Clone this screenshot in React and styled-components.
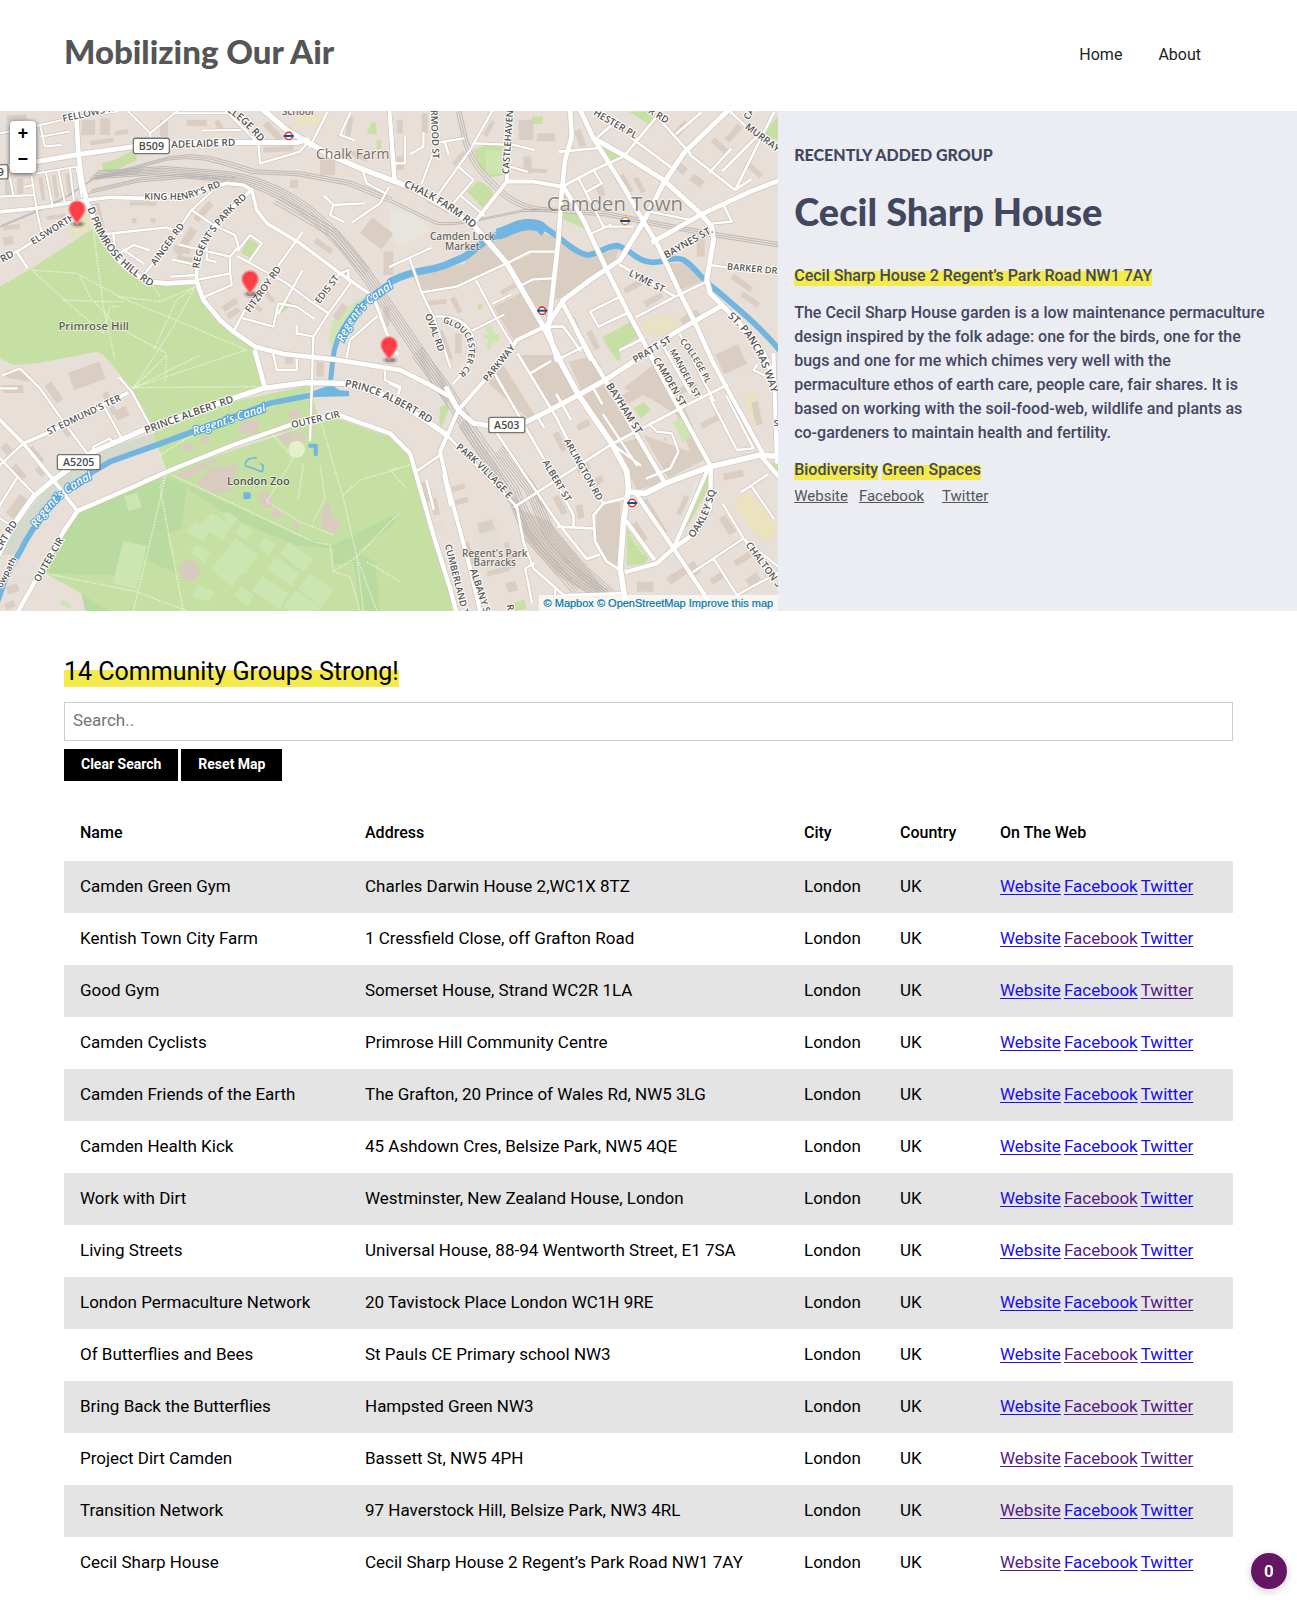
import React, { useState } from "react";
import styled, { createGlobalStyle } from "styled-components";

const GlobalStyle = createGlobalStyle`
  *, *::before, *::after { box-sizing: border-box; }
  body {
    margin: 0;
    background: #fff;
    color: #000;
    font: 17px/24px Roboto, "Liberation Sans", sans-serif;
  }
`;

const displayFont = `Lato, "Open Sans", sans-serif`;

/* ---------- header ---------- */

const Header = styled.header`
  display: flex;
  align-items: center;
  justify-content: space-between;
  height: 111px;
  padding: 0 80px 10px 64px;
`;

const SiteTitle = styled.h1`
  margin: 0;
  color: #555;
  font: 900 33px/40px ${displayFont};
`;

const Nav = styled.nav`
  display: flex;
  gap: 4px;
  padding-top: 8px;
  font-size: 16px;
`;

const NavLink = styled.a`
  padding: 0 16px;
  color: #222;
  text-decoration: none;
`;

/* ---------- map and featured group ---------- */

const Hero = styled.section`
  display: grid;
  grid-template-columns: 3fr 2fr;
  background: #ecedf3;
`;

const MapFrame = styled.div`
  position: relative;
  height: 500px;
  overflow: hidden;
`;

const MapDrawing = styled.svg`
  display: block;
  width: 100%;
  height: 100%;
  font-family: "Open Sans", "Noto Sans", sans-serif;
`;

const ZoomControl = styled.div`
  position: absolute;
  top: 10px;
  left: 10px;
  display: flex;
  flex-direction: column;
  width: 26px;
  border-radius: 4px;
  background: #fff;
  box-shadow: 0 1px 5px rgba(0, 0, 0, 0.65);
`;

const ZoomButton = styled.button`
  height: 26px;
  padding: 0;
  border: 0;
  background: none;
  color: #000;
  font: bold 18px/26px "Liberation Mono", monospace;
`;

const Attribution = styled.div`
  position: absolute;
  right: 0;
  bottom: 0;
  padding: 0 5px;
  background: rgba(255, 255, 255, 0.7);
  font: 11px/16px "Liberation Sans", sans-serif;
`;

const AttributionLink = styled.a`
  color: #0078a8;
  text-decoration: none;
  -webkit-text-stroke: 0.2px #0078a8;
`;

const Featured = styled.article`
  padding: 32px 28px 32px 16px;
  color: #424760;
`;

const Eyebrow = styled.h4`
  margin: 0;
  font: 900 16px/24px ${displayFont};
  text-transform: uppercase;
`;

const GroupName = styled.h2`
  margin: 20px 0 29px;
  font: 900 38px/48px ${displayFont};
`;

const Mark = styled.span`
  padding-bottom: 1px;
  background: linear-gradient(transparent ${(p) => p.$from}, #f4ea4c ${(p) => p.$from});
`;

const Copy = styled.p`
  margin: 0 0 13px;
  font-size: 16px;
  font-weight: 500;
`;

const Unbroken = styled.span`
  white-space: nowrap;
`;

const FeaturedLinks = styled.div`
  display: flex;
  font-size: 15px;
  margin-top: -11px;
`;

const FeaturedLink = styled.a`
  margin-right: ${(p) => p.$gap};
  color: #555;
`;

/* ---------- group list ---------- */

const Groups = styled.main`
  padding: 45px 64px 32px;
`;

const Count = styled.h3`
  margin: 0;
  font-size: 25px;
  font-weight: 400;
  line-height: 32px;
`;

const SearchBox = styled.input`
  display: block;
  width: 100%;
  height: 39px;
  margin: 14px 0 8px;
  padding: 0 8px 4px;
  border: 1px solid #ccc;
  border-radius: 0;
  font: inherit;
  &::placeholder { color: #757575; }
`;

const Actions = styled.div`
  display: flex;
  gap: 3px;
`;

const ActionButton = styled.button`
  height: 32px;
  padding: 0 17px 2px;
  border: 0;
  background: #000;
  color: #fff;
  font: bold 14px/24px Roboto, "Liberation Sans", sans-serif;
`;

const Table = styled.table`
  width: 100%;
  margin-top: 22px;
  border-collapse: collapse;
  table-layout: fixed;
`;

const Col = styled.col`
  width: ${(p) => p.$width || "auto"};
`;

const HeadCell = styled.th`
  height: 58px;
  padding: 2px 16px 0;
  font-size: 16px;
  font-weight: 500;
  text-align: left;
`;

const Row = styled.tr`
  height: 52px;
  &:nth-child(odd) { background: #e4e4e4; }
`;

const Cell = styled.td`
  padding: 0 16px 2px;
  white-space: nowrap;
`;

const WebLinks = styled.div`
  display: flex;
  gap: 3px;
`;

const WebLink = styled.a`
  color: ${(p) => (p.$seen ? "#551a8b" : "#1a0dee")};
  text-underline-offset: 2px;
`;

const Counter = styled.button`
  position: fixed;
  right: 10px;
  bottom: 32px;
  width: 36px;
  height: 36px;
  padding: 0;
  border: 0;
  border-radius: 50%;
  background: #651564;
  box-shadow: 0 2px 8px rgba(0, 0, 0, 0.2);
  color: #fff;
  font: bold 17px/36px Roboto, sans-serif;
`;

/* ---------- map data: four tiles, each drawn at three units per pixel ---------- */

const tiles = {
  a: "translate(0 100) scale(.33333)",
  b: "translate(390 100) scale(.33333)",
  c: "translate(0 355) scale(.33333)",
  d: "translate(390 355) scale(.33333)",
};

const areas = [
  ["a", "#c6dfa3", "M0 560L95 505 280 385 300 400 340 465 440 545 590 545 610 600 660 660 765 740 795 865 460 1000 395 865 310 765 290 755 110 790 40 795 0 775Z"],
  ["a", "#e6e4c0", "M205 380L262 340 280 385 215 420Z"],
  ["a", "#c6dfa3", "M305 190L340 182 408 148 410 180 340 215 310 215Z M745 415L775 435 755 475 722 460Z M1100 100L1115 68 1128 68 1130 105Z M1130 120h14v28h-14Z M835 635l28-32 14 8-28 26Z"],
  ["a", "#d2e3b5", "M1000 660L1080 595 1100 590 1040 690 1000 740 985 720Z"],
  ["a", "#ece3c2", "M870 70L905 45 975 40 955 75 900 75Z"],
  ["c", "#c6dfa3", "M460 235L700 140 930 90 960 200 700 275 500 352 470 275Z"],
  ["c", "#c6dfa3", "M232 468L500 352 960 200 1010 190 1170 245 1235 310 1260 420 1300 570 1370 768 270 768 245 715 135 655 190 535Z"],
  ["c", "#badb9f", "M232 468L400 400 500 365 560 400 545 520 500 540 530 655 430 610 410 700 340 660 135 655 190 535Z"],
  ["c", "#badb9f", "M510 365L780 490 890 540 1000 570 1200 470 1170 520 1070 590 1125 620 1140 768 1080 768 1060 620 1000 630 1000 580 880 570 700 490 560 400Z M245 715l80 53h-70Z"],
  ["c", "#d5d9cc", "M160 370L290 290 460 235 465 265 320 325 200 400 100 500 50 600 0 600 60 500Z"],
  ["c", "#cbe6b0", "M370 558L440 572 410 700 338 685Z M372 425l38-12 15 44-38 12Z M555 530l30-30 48 25-22 36Z M600 510l35-36 60 35-25 50Z M665 480l15-10 35 20-18 24Z M665 605l42-56 68 50-40 60Z M630 640l35-38 70 42-40 50Z M570 590l18-22 42 24-18 32Z M840 595l28-34 72 50-30 40Z M800 640l30-32 68 45-22 42Z M755 705l32-42 78 52-26 50Z M895 700l35-44 72 50-40 50Z M700 720l25-26 35 26-18 34Z M575 725l20-36 50 22-18 30Z M852 750l35-44 75 50-10 12h-90Z M775 575l22-28 28 20-20 38Z M705 535l20-32 35 25-20 30Z M178 745l10-10 28 14-6 12Z"],
  ["c", "#d9cbc0", "M585 385L640 335 715 330 690 410 640 415Z M525 360L620 320 680 305 600 345 560 375Z M710 225L735 195 778 195 772 230 740 240Z M835 245l38-18 12 28-30 14Z M862 172l28-12 12 24-28 14Z M785 405l30 20 5 30-30 5-15-35Z M808 475l25-18 20 18-22 18Z M965 470l20-40 10 50 30 30-30 25-30-20Z M870 500l28 5-5 28Z M890 230l28 10-8 22-26-10Z M548 270l25-8 10 20-28 8Z M600 250l20-6 8 20-20 6Z"],
  ["c", "#d7cbbf", "M537 646a31 31 0 1 0 62 0a31 31 0 1 0-62 0Z"],
  ["c", "#e6f0c8", "M865 283a25 25 0 1 0 50 0a25 25 0 1 0-50 0Z"],
  ["b", "#c6dfa3", "M250 150L290 135 345 140 340 225 305 232 270 205Z M230 275L265 242 300 262 312 290 275 322 255 300Z M715 35h70l15 22-18 20Z M640 145l48 20-22 18Z M1120 100l50-60v85Z M425 50h32v22h-32Z M522 275l14 18-2 42-14-8Z M520 342l46 0 18 45-65-30Z M637 712L725 662 745 710 690 745 690 780 665 760Z M262 615l12-4 4 14-12 4Z"],
  ["b", "#cde5ae", "M285 150h50v70l-45 5Z M285 680l20-5 5 22 20 12-5 18-18-5-5 30-14-5 6-30-20-6 20-10Z"],
  ["b", "#e9e2c4", "M755 660L835 640 875 680 820 705 760 700Z M435 492l45-4v25l-40 2Z"],
  ["b", "#e8e5df", "M0 330L70 340 125 390 30 440 0 400Z"],
  ["b", "#dacdc2", "M280 425L340 395 420 390 500 410 495 450 420 450 350 485 200 560 90 570 70 530 225 490 235 455Z M360 490L430 460 500 460 470 650 450 640Z M510 430L590 470 650 455 690 440 670 490 600 540 520 590 495 600Z M310 620L410 570 460 670 370 720Z M820 490L900 490 945 540 870 570Z"],
  ["d", "#dacdc2", "M290 80L340 30 440 190 420 195Z M390 0L500 0 555 120 480 160Z M535 20L600 5 640 75 575 110Z M575 125L640 90 730 240 670 260Z M670 270L740 250 815 385 740 405 715 350Z M640 450L690 440 690 640 650 610 615 550 620 480Z M800 20L880 150 950 310 835 370 760 240 900 290 860 180 780 130 700 100Z M380 460L480 500 640 700 660 720 600 720 500 660 410 560Z"],
  ["d", "#c6dfa3", "M935 365L955 360 955 400 900 500 855 560Z M710 520L775 610 765 625 710 632Z M1125 325l45-5v42Z M730 160l30-18 22 22-30 26Z M372 742l30-8 8 28-35 4Z M150 155l22-10 5 18-22 50-8-5Z M820 250l6-5 6 12-8 0Z M670 0h22l-8 18Z"],
  ["d", "#cde5ae", "M848 200l26-12 30 60-26 12Z"],
  ["d", "#ebe2c0", "M1058 125l36-16 28 90-30 16Z M1030 440L1070 405 1170 520 1130 560 1090 530Z"],
  ["d", "#e3ddd6", "M255 500l55-18 35 150-55 14Z M130 500l22-6 12 30-22 6Z"],
];

/* tile, x, y, width, height, rotation */
const buildings = [
  ["a", 245, 60, 40, 45, 0], ["a", 300, 55, 30, 50, 0], ["a", 345, 90, 40, 14, -8], ["a", 270, 118, 70, 14, -8],
  ["a", 20, 45, 60, 18, -5], ["a", 30, 85, 50, 14, -5], ["a", 480, 60, 24, 50, 0], ["a", 560, 60, 60, 18, 0], ["a", 650, 60, 16, 35, -30],
  ["a", 790, 140, 90, 16, -3], ["a", 810, 60, 20, 70, -45], ["a", 960, 175, 44, 50, 0], ["a", 1045, 160, 60, 14, 25], ["a", 1040, 50, 16, 60, 10],
  ["a", 285, 310, 22, 85, -12], ["a", 390, 305, 80, 12, 0], ["a", 395, 355, 14, 14, 0], ["a", 452, 355, 14, 14, 0],
  ["a", 545, 380, 24, 90, 32], ["a", 520, 440, 50, 18, 12], ["a", 530, 470, 50, 18, 8], ["a", 600, 300, 20, 70, 42], ["a", 650, 330, 20, 50, 42],
  ["a", 665, 605, 50, 18, -35], ["a", 680, 630, 40, 18, -35], ["a", 760, 590, 14, 50, -40], ["a", 800, 570, 14, 40, -40],
  ["a", 940, 430, 60, 16, 35], ["a", 1010, 610, 22, 50, 35], ["a", 1090, 370, 80, 60, 38], ["a", 1150, 620, 18, 60, 0], ["a", 1150, 455, 30, 70, 0],
  ["a", 870, 240, 24, 24, 0], ["a", 15, 235, 18, 50, 0], ["a", 52, 235, 18, 50, 0], ["a", 120, 232, 12, 70, -8], ["a", 160, 225, 12, 70, -8], ["a", 200, 220, 12, 70, -8],
  ["a", 10, 375, 50, 14, -8], ["a", 10, 410, 30, 24, -8], ["a", 140, 345, 60, 12, -8],
  ["c", 210, 35, 100, 55, -20], ["c", 10, 90, 60, 24, 0], ["c", 20, 50, 70, 24, 10], ["c", 150, 80, 24, 65, -35], ["c", 185, 195, 24, 50, -35], ["c", 210, 175, 80, 18, -25],
  ["c", 320, 110, 18, 70, -25], ["c", 345, 160, 40, 30, -25], ["c", 80, 290, 55, 22, 50], ["c", 30, 340, 50, 24, 50], ["c", 110, 330, 30, 30, 50], ["c", 35, 420, 34, 70, 38], ["c", 20, 690, 36, 24, -20], ["c", 15, 740, 30, 20, -20],
  ["c", 855, 8, 24, 20, 0], ["c", 950, 20, 22, 45, 0], ["c", 5, 270, 30, 24, 50],
  ["b", 95, 40, 18, 60, 0], ["b", 20, 60, 18, 40, 0], ["b", 20, 170, 22, 40, 0], ["b", 60, 270, 60, 14, 25], ["b", 110, 310, 70, 14, 30],
  ["b", 385, 60, 45, 60, 0], ["b", 440, 100, 55, 24, 0], ["b", 400, 170, 24, 50, 0], ["b", 380, 205, 90, 12, 4], ["b", 560, 90, 20, 50, -20],
  ["b", 290, 60, 14, 50, 30], ["b", 200, 150, 14, 50, 40], ["b", 620, 250, 20, 40, -20], ["b", 700, 220, 16, 60, -30], ["b", 740, 230, 16, 50, -30],
  ["b", 850, 190, 40, 24, 40], ["b", 900, 230, 40, 24, 35], ["b", 960, 130, 60, 18, 42], ["b", 1020, 70, 20, 60, 42], ["b", 1060, 200, 60, 16, 42], ["b", 860, 60, 20, 60, 42],
  ["b", 1020, 540, 70, 18, 35], ["b", 1050, 590, 60, 18, 35], ["b", 920, 410, 24, 60, 0], ["b", 985, 745, 75, 65, -25], ["b", 700, 550, 60, 18, -28], ["b", 760, 590, 60, 18, -28],
  ["b", 110, 600, 60, 14, -5], ["b", 190, 590, 16, 50, -28], ["b", 330, 560, 50, 14, -28], ["b", 550, 650, 18, 70, -25], ["b", 600, 690, 18, 60, -25], ["b", 870, 640, 60, 24, -32], ["b", 160, 690, 14, 90, -20], ["b", 195, 700, 20, 60, 0],
  ["d", 690, 110, 60, 30, -28], ["d", 860, 90, 60, 18, -28], ["d", 930, 190, 60, 18, -28], ["d", 1090, 140, 20, 70, -12],
  ["d", 100, 380, 20, 60, -12], ["d", 125, 430, 20, 50, -12], ["d", 185, 390, 40, 16, -15], ["d", 195, 430, 40, 16, -15], ["d", 265, 500, 45, 30, -15],
  ["d", 230, 560, 16, 70, -15], ["d", 350, 560, 16, 80, -15], ["d", 290, 640, 70, 16, -15], ["d", 350, 680, 30, 30, -15],
  ["d", 500, 420, 20, 60, -28], ["d", 560, 450, 20, 40, -10], ["d", 440, 400, 16, 60, -28], ["d", 560, 330, 40, 20, -28], ["d", 600, 370, 40, 20, -28], ["d", 470, 540, 60, 16, 50],
  ["d", 770, 430, 18, 60, -33], ["d", 800, 480, 18, 60, -33], ["d", 740, 500, 18, 60, -33], ["d", 870, 420, 16, 60, 25], ["d", 830, 650, 60, 24, -33], ["d", 900, 620, 24, 40, -33],
  ["d", 1000, 480, 24, 60, -33], ["d", 1030, 600, 60, 20, -33], ["d", 960, 660, 40, 20, -33], ["d", 1070, 660, 40, 30, -33], ["d", 1000, 350, 60, 20, -12], ["d", 500, 230, 20, 60, -28], ["d", 560, 200, 40, 20, -28], ["d", 740, 680, 50, 30, 0],
];

/* tile, width, path */
const water = [
  ["c", 17, "M-8 740L20 660 60 590C110 490 180 400 330 320L470 270 600 222 810 145 950 117"],
  ["c", 4, "M940 110L975 98 990 80 1005 100 1020 108 1045 110 1045 122 945 124Z"],
  ["a", 15, "M990 855L998 780C1005 700 1060 610 1200 530"],
  ["b", 22, "M0 545C40 525 60 520 100 512C150 505 180 490 225 470L280 427 335 398"],
  ["b", 34, "M322 403C365 390 385 372 420 374S450 382 465 394"],
  ["b", 17, "M440 374C490 385 540 455 590 465C625 465 640 440 680 437C720 445 740 488 790 487C830 485 850 468 880 480C915 500 930 535 980 572C1060 640 1120 690 1180 765"],
  ["c", 5, "M735 330C738 310 750 310 770 308M780 325L790 332 787 350 735 332"],
  ["c", 12, "M925 272h22v30 M730 418h16v8h-16"],
];

const rails = [
  ["b", 3, 8, "M205 30L228 130C250 190 270 220 350 290Q400 325 450 328L650 342 800 372 960 402 1170 435"],
  ["b", 2, 8, "M0 302L140 370Q190 375 250 363L400 332 500 330"],
  ["a", 3, 8, "M290 235L450 190Q560 150 680 190L760 215 900 222 1050 250 1170 300"],
  ["a", 2, 9, "M0 380L120 330 200 290 290 230 420 215"],
  ["a", 3, 9, "M270 275L420 240 560 228 700 240"],
  ["a", 6, 7, "M280 225L480 212 650 225C900 250 1040 430 1150 600L1260 760 1350 900"],
  ["a", 4, 9, "M830 300L900 340 1000 400 1100 520"],
  ["d", 6, 8, "M80 -10L170 110 250 240 370 410C420 540 480 620 640 720"],
  ["d", 6, 7, "M330 280L420 400 480 540 580 650 660 720"],
  ["d", 4, 8, "M215 205L300 330 370 440 410 540 560 710"],
];

const roads = [
  /* side streets */
  ["a", 6, "M120 75L230 50 350 35M120 75L135 140 180 135M125 110L205 95M385 35L450 100 535 30M450 100L455 135M520 40H680M610 92L720 90M0 100L60 88 120 75"],
  ["a", 6, "M100 222L230 200 245 290M95 230L110 330 125 400M138 218L158 320M175 210L195 312M210 206L222 305M0 290L100 285M30 235L40 285M75 260L100 255"],
  ["a", 7, "M675 30L775 130 780 190 900 155 925 125M980 40L930 140M1050 40L1020 105 1060 120M1090 220L1100 250 1155 280M1165 265L1140 310 1060 365M975 290L1000 315 1090 310M1000 315L990 345 1030 365"],
  ["a", 7, "M640 270L575 330 500 440 435 520M320 402L500 382 545 400M340 405L345 450 360 460 400 435 445 450M430 490L370 450"],
  ["a", 7, "M575 330L640 375 705 405 715 440 690 470 690 520 590 540M540 435L690 470M690 520L695 555 615 590M520 480L590 495M515 530L590 525M620 445L620 480 645 485"],
  ["a", 7, "M905 400L840 490 740 620 700 695M715 470L860 550 940 610 985 640M1020 520L940 610M1120 590L1020 520 1045 510 1045 540M715 450L750 405 785 430 750 480M905 515L835 640M730 655L820 680 835 610 890 620 940 655M985 640L940 710 930 1020M890 700L940 710M890 680L890 700M1050 550L985 640M1040 770L1050 720 1130 650"],
  ["a", 8, "M-5 480L60 450 220 350M50 455L80 500"],
  ["c", 7, "M120 100L190 200 265 300M310 150L365 250M0 310L100 415M70 265L0 330M50 370L0 450M275 300L280 275 330 250 340 265M10 60L60 40 120 100M0 100H50M0 490L30 510M820 0L830 45H890V15M1155 50V75L1200 95M360 70L395 110 460 230"],
  ["b", 7, "M0 500L120 445M60 480L95 580 130 650 180 800M95 577L200 560 350 490 420 455 500 455M260 545L310 640 370 740M310 610L360 585M395 555L430 538 485 535M250 690L340 645M130 650Q250 640 255 750Q240 800 190 850"],
  ["b", 7, "M250 130L370 135 430 150M305 35L240 150 140 290M125 170L95 250M130 130L220 115M205 200L250 240 190 310M215 290L280 345M165 130L175 160M100 100V140L65 160M45 110V190H15M360 200L410 215"],
  ["b", 8, "M800 50L700 170 610 210 525 255M725 115L840 200M800 50L900 160M860 100L930 40M900 165L1035 270 1080 240M960 215L1020 150M1020 35L1100 110M1150 40L1035 270M1100 110L1000 210M510 155L620 145M625 110L660 80"],
  ["b", 7, "M565 235L640 380 725 380M605 400L660 375M610 210L635 250 590 275M780 335L900 360M970 370L1025 365 1000 315M960 495L1030 505"],
  ["b", 8, "M690 495L855 590 950 545M740 650L855 590M690 590L600 635 625 680 710 640M515 600L560 700 600 780M480 680H520L570 750M510 775L580 740M690 750L760 715M870 705L970 900M820 740L900 880"],
  ["d", 8, "M310 50L460 310 550 480 550 515M385 0L500 190 600 390 640 445M700 430L640 445 610 480 615 560 650 620 690 645M505 515L610 520M310 220L500 500 590 612 625 600M420 55L480 20M445 190L460 215M500 120L540 190"],
  ["d", 8, "M170 240L380 455 400 560 430 640 520 720 690 715M375 455L660 270 890 150 1010 90M85 345L150 300M160 360L180 450M110 380L130 460M0 85L30 100 25 115"],
  ["d", 7, "M670 270L750 330M780 210L800 230 845 235 865 290 840 340 770 370M610 100L635 145M640 180L740 330M1010 125L1090 280 1040 285 960 130M1000 450L1060 550 1130 650M910 650L1060 550 1170 640M970 610L1040 720M1040 720L1170 650M1055 410L1130 360M1085 395L1150 490M1100 30L1090 45 1120 60M425 740L405 640 430 625M495 705L495 740"],
  /* secondary */
  ["a", 11, "M-10 337L110 325 262 300 330 292 440 295 560 285 680 250 730 255 755 270 700 320 620 400 590 480 590 545"],
  ["a", 10, "M755 270L770 330 800 370 900 430 1020 520 1120 590 1160 700 1190 760"],
  ["a", 11, "M1168 30L1185 240"],
  ["c", 11, "M0 195L70 265 160 375 232 468M70 265L140 235 380 115"],
  ["c", 13, "M55 768L110 670 190 530 232 468 400 395 500 350 700 270 870 210 1010 178 1170 235 1230 295 1260 400 1300 540 1350 700 1370 775"],
  ["b", 12, "M355 30L350 240M255 365L350 245 430 245 515 260"],
  ["b", 14, "M1170 240L1080 275 930 345 790 425"],
  ["d", 12, "M205 165L350 0 380 -45 475 -90M205 165L150 290 170 380 240 640 270 768M950 350L850 580M710 500L790 610M1150 0L1160 320"],
  ["d", 13, "M740 420L850 580 950 730M520 -150L600 0 645 75 740 240 825 385M780 0L850 130 960 330M965 15L1010 100 1115 290M710 650L800 625 850 580 920 530 960 460 962 340M1110 300L1170 370"],
  /* main roads */
  ["a", 14, "M228 30L235 160 245 240 262 310 300 400 340 465 380 505 440 545 500 550 590 545 610 600 660 660 700 695 765 740 850 762 1000 778 1200 810 1280 850 1350 890 1375 930"],
  ["a", 15, "M-10 205L110 185 240 163 400 140 520 130 700 128 890 128 920 120"],
  ["a", 16, "M790 30L860 90 920 125 1000 170 1080 205 1230 262 1350 330 1420 375 1520 490 1630 680 1680 780"],
  ["c", 14, "M765 -10L795 100"],
  ["c", 16, "M-10 610L40 510 100 425 160 375 280 290 430 225 700 130 790 100 920 83 1035 85 1170 125 1290 205 1340 240"],
  ["b", 12, "M0 60L12 235"],
  ["b", 14, "M540 30L545 110 525 180 515 270 505 420 480 640 475 690 500 780M570 30L610 115 700 260 760 365 800 430 870 580 920 680 965 780M520 260L580 360 650 510 720 650 790 780"],
  ["b", 15, "M610 115L700 165 820 240 930 340 965 380 970 420 950 540 960 580 1030 650 1120 760 1150 830M1010 35L880 160 820 250 760 365 690 480 600 540 520 600 475 670"],
  ["d", 15, "M170 100L205 165 250 205 300 212 400 205 480 165 565 120 645 75 730 20 850 -65 990 -145"],
  ["d", 17, "M500 0L565 120 665 265 710 350 715 400 700 500 690 640 710 768M715 410L765 415 825 385 960 335 1110 300 1170 305"],
];

const footpaths = [
  ["a", "M280 385L290 470 310 620 345 780M95 510L230 520 360 590 480 605 585 560M190 600L320 605 370 605M240 530L270 590 350 680 500 760M95 510L200 605 310 700M585 560L520 680 400 865M355 590L480 640 740 750M740 750L395 865M450 545L480 590M310 700L330 620 355 620M585 560L530 600 460 750"],
  ["c", "M400 100L500 0 495 80M395 98L780 95M400 100L560 20 600 0M500 352L940 560 990 570 1000 650 1070 605M500 352L400 768M500 352L480 400 550 768M930 90L1030 430 1070 605 1200 470M135 655L410 710 560 768M470 270L500 352M1030 420L1080 375 1200 340M1070 605L1130 768M1070 605L1090 768M1100 620L1200 680M1000 650L1050 665 1080 768M820 240L880 310 800 440 900 500 1000 540M960 330L975 430 940 500M910 330L895 430M480 300L560 250 690 200 930 110"],
  ["d", "M0 345L60 330M0 345L50 400M720 540L760 600M920 380L870 530"],
];

/* tile, size, path, text */
const streetNames = [
  ["a", 29, "M190 66L360 30", "FELLOWS RD"],
  ["a", 30, "M514 144L730 137", "ADELAIDE RD"],
  ["a", 28, "M433 299L540 300Q600 290 680 250", "KING HENRY'S RD"],
  ["a", 28, "M100 435L240 348", "ELSWORTHY"],
  ["a", 30, "M8 488L60 458", "RD"],
  ["a", 31, "M262 325C290 410 330 490 460 565", "D PRIMROSE HILL RD"],
  ["a", 28, "M466 498L560 370", "AINGER RD"],
  ["a", 29, "M598 506C600 450 640 385 740 295", "REGENT'S PARK RD"],
  ["a", 29, "M750 640L850 500", "FITZROY RD"],
  ["a", 28, "M958 613L1030 520", "EDIS ST"],
  ["a", 30, "M680 35C720 60 750 90 800 150", "LLEGE RD"],
  ["b", 31, "M40 260C110 290 170 320 260 395", "CHALK FARM RD"],
  ["b", 28, "M122 30L128 175", "RMOOD ST"],
  ["b", 28, "M356 223L370 20", "CASTLEHAVEN"],
  ["b", 29, "M608 44L740 120", "HESTER PL"],
  ["b", 29, "M772 38L850 85", "R RD"],
  ["b", 28, "M1075 62L1095 30", "CA"],
  ["b", 29, "M1063 84L1190 180", "MURRAY ST"],
  ["b", 30, "M828 476L990 385", "BAYNES ST."],
  ["b", 28, "M1010 509L1190 525", "BARKER DR"],
  ["b", 29, "M714 526L830 585", "LYME ST"],
  ["b", 28, "M104 645L155 780", "OVAL RD"],
  ["b", 26, "M157 668C205 680 240 710 236 755C234 785 225 805 195 830", "GLOUCESTER CR"],
  ["b", 31, "M1012 650C1070 700 1110 760 1150 900", "ST. PANCRAS WAY"],
  ["b", 29, "M735 790L870 710", "PRATT ST"],
  ["b", 26, "M868 725C900 760 930 810 960 880", "COLLEGE PL"],
  ["b", 26, "M838 753C870 810 890 850 930 920", "MANDELA ST"],
  ["c", 28, "M146 240L380 128", "ST EDMUND'S TER"],
  ["c", 31, "M438 236L590 180 720 135", "PRINCE ALBERT RD"],
  ["c", 31, "M1033 95C1130 110 1200 150 1320 225", "PRINCE ALBERT RD"],
  ["c", 29, "M876 220L1040 182", "OUTER CIR"],
  ["c", 29, "M118 683L205 530", "OUTER CIR"],
  ["c", 29, "M-14 620C15 560 40 520 80 470", "LBERT RD"],
  ["c", 27, "M5 700L62 590", "owpath"],
  ["d", 28, "M292 82L395 -45", "PARKWAY"],
  ["d", 29, "M196 280C250 320 290 360 360 440", "PARK VILLAGE E"],
  ["d", 28, "M456 322L545 470", "ALBERT ST"],
  ["d", 28, "M520 257L640 470", "ARLINGTON RD"],
  ["d", 31, "M647 92L760 270", "BAYHAM ST"],
  ["d", 29, "M788 15C818 60 848 110 888 190", "CAMDEN ST"],
  ["d", 30, "M908 550C950 500 970 450 982 370", "OAKLEY SQ"],
  ["d", 29, "M1065 570L1200 750", "CHALTON ST"],
  ["d", 28, "M164 570L220 790", "CUMBERLAND T"],
  ["d", 29, "M240 645L290 800", "ALBANY ST"],
  ["d", 28, "M1150 212L1180 212", "S"],
  ["d", 28, "M350 750L358 800", "R"],
];

const canalNames = [
  ["a", "M1030 728C1060 650 1110 600 1210 545"],
  ["c", "M582 240L830 158"],
  ["c", "M110 520C150 450 210 400 300 360"],
];

/* tile, x, y, size, colour, text */
const placeNames = [
  ["a", 893, 46, 30, "#6b6762", "School"],
  ["a", 1058, 177, 42, "#7a6a60", "Chalk Farm"],
  ["a", 281, 691, 34, "#5d6350", "Primrose Hill"],
  ["b", 674, 332, 61, "#878380", "Camden Town"],
  ["b", 217, 420, 30, "#6b6762", "Camden Lock"],
  ["b", 217, 449, 30, "#6b6762", "Market"],
  ["c", 775, 391, 33, "#4f5448", "London Zoo"],
  ["d", 314, 605, 30, "#6b6762", "Regent's Park"],
  ["d", 314, 633, 30, "#6b6762", "Barracks"],
];

const shields = [
  ["a", 400, 115, 108, 46, "B509"],
  ["a", -20, 194, 44, 43, "9"],
  ["c", 172, 299, 128, 45, "A5205"],
  ["d", 296, 187, 108, 46, "A503"],
];

const stations = [
  ["a", 866, 108, "#e1251b"],
  ["b", 705, 363, "#ee8b1c"],
  ["b", 456, 632, "#e1251b"],
  ["d", 726, 444, "#e1251b"],
];

const pins = [[77, 210], [250, 280], [389, 346]];

function CityMap() {
  return (
    <MapDrawing viewBox="0 111 778 500" preserveAspectRatio="xMidYMid slice" role="img" aria-label="Map of Camden community groups">
      <rect x="-400" y="-200" width="1600" height="1200" fill="#e8dfd8" />
      {areas.map(([t, fill, d], i) => <path key={i} transform={tiles[t]} fill={fill} d={d} />)}
      {buildings.map(([t, x, y, w, h, r], i) => (
        <g key={i} transform={tiles[t]}>
          <rect x={x} y={y} width={w} height={h} fill="#dacec4" transform={`rotate(${r} ${x + w / 2} ${y + h / 2})`} />
        </g>
      ))}
      {footpaths.map(([t, d], i) => (
        <path key={i} transform={tiles[t]} d={d} fill="none" stroke="#eff5e2" strokeWidth="4" strokeDasharray="4 4" />
      ))}
      {water.map(([t, w, d], i) => (
        <path key={i} transform={tiles[t]} d={d} fill={w === 4 ? "#71b5e1" : "none"} stroke="#71b5e1" strokeWidth={w} strokeLinejoin="round" />
      ))}
      {roads.map(([t, w, d], i) => (
        <path key={i} transform={tiles[t]} d={d} fill="none" stroke="#cfc5bd" strokeWidth={w + 4} strokeLinejoin="round" />
      ))}
      {rails.map(([t, n, gap, d], i) => (
        <g key={i} transform={tiles[t]} fill="none" stroke="#b3b0ae" strokeWidth="2.5">
          {Array.from({ length: n }, (_, k) => (
            <path key={k} d={d} transform={`translate(${(k - (n - 1) / 2) * gap * 0.7} ${-(k - (n - 1) / 2) * gap * 0.7})`} />
          ))}
        </g>
      ))}
      {roads.map(([t, w, d], i) => (
        <path key={i} transform={tiles[t]} d={d} fill="none" stroke="#fff" strokeWidth={w} strokeLinejoin="round" strokeLinecap="round" />
      ))}
      {stations.map(([t, x, y, c], i) => (
        <g key={i} transform={`${tiles[t]} translate(${x} ${y})`}>
          <circle r="11" fill="#fff" stroke={c} strokeWidth="4" />
          <rect x="-15" y="-3" width="30" height="6" fill="#17478f" />
        </g>
      ))}
      {canalNames.map(([t, d], i) => (
        <g key={i} transform={tiles[t]}>
          <path id={`canal-${i}`} d={d} fill="none" />
          <text fontSize="34" fontWeight="600" fontStyle="italic" fill="#fff" stroke="#4a9fd8" strokeWidth="6" paintOrder="stroke">
            <textPath href={`#canal-${i}`}>Regent's Canal</textPath>
          </text>
        </g>
      ))}
      {streetNames.map(([t, size, d, name], i) => (
        <g key={i} transform={tiles[t]}>
          <path id={`street-${i}`} d={d} fill="none" />
          <text fontSize={size} fontWeight="600" fill="#555250" stroke="#fff" strokeWidth="6" strokeLinejoin="round" paintOrder="stroke">
            <textPath href={`#street-${i}`}>{name}</textPath>
          </text>
        </g>
      ))}
      {placeNames.map(([t, x, y, size, fill, name], i) => (
        <text key={i} transform={tiles[t]} x={x} y={y} fontSize={size} fontWeight={size > 40 ? 400 : 600} textAnchor="middle" fill={fill} stroke="#fff" strokeOpacity=".7" strokeWidth="4" paintOrder="stroke">{name}</text>
      ))}
      {shields.map(([t, x, y, w, h, name], i) => (
        <g key={i} transform={tiles[t]}>
          <rect x={x} y={y} width={w} height={h} rx="6" fill="#fff" stroke="#77736f" strokeWidth="4" />
          <text x={x + w / 2} y={y + h / 2 + 12} fontSize="32" fontWeight="600" textAnchor="middle" fill="#4c4a48">{name}</text>
        </g>
      ))}
      {pins.map(([x, y], i) => (
        <g key={i} transform={`translate(${x} ${y})`}>
          <ellipse cx="1" cy="14" rx="8" ry="4" fill="#000" opacity=".12" />
          <ellipse cx="1" cy="14" rx="5" ry="2" fill="#000" opacity=".3" />
          <path d="M0 14C-2 9-8 5-8-1A8 8 0 0 1 8-1C8 5 2 9 0 14Z" fill="#ff3f48" stroke="#f08c8c" strokeWidth="1.5" />
        </g>
      ))}
    </MapDrawing>
  );
}

/* name, address, visited flags for website, facebook, twitter */
const groups = [
  ["Camden Green Gym", "Charles Darwin House 2,WC1X 8TZ", 0, 0, 0],
  ["Kentish Town City Farm", "1 Cressfield Close, off Grafton Road", 0, 1, 0],
  ["Good Gym", "Somerset House, Strand WC2R 1LA", 0, 0, 1],
  ["Camden Cyclists", "Primrose Hill Community Centre", 0, 0, 0],
  ["Camden Friends of the Earth", "The Grafton, 20 Prince of Wales Rd, NW5 3LG", 0, 0, 0],
  ["Camden Health Kick", "45 Ashdown Cres, Belsize Park, NW5 4QE", 0, 0, 0],
  ["Work with Dirt", "Westminster, New Zealand House, London", 0, 1, 0],
  ["Living Streets", "Universal House, 88-94 Wentworth Street, E1 7SA", 0, 1, 0],
  ["London Permaculture Network", "20 Tavistock Place London WC1H 9RE", 0, 0, 1],
  ["Of Butterflies and Bees", "St Pauls CE Primary school NW3", 0, 1, 0],
  ["Bring Back the Butterflies", "Hampsted Green NW3", 0, 1, 1],
  ["Project Dirt Camden", "Bassett St, NW5 4PH", 1, 1, 1],
  ["Transition Network", "97 Haverstock Hill, Belsize Park, NW3 4RL", 1, 0, 0],
  ["Cecil Sharp House", "Cecil Sharp House 2 Regent’s Park Road NW1 7AY", 1, 0, 0],
];

const sites = ["Website", "Facebook", "Twitter"];

export default function App() {
  const [query, setQuery] = useState("");
  const shown = groups.filter((g) => `${g[0]} ${g[1]}`.toLowerCase().includes(query.toLowerCase()));

  return (
    <>
      <GlobalStyle />
      <Header>
        <SiteTitle>Mobilizing Our Air</SiteTitle>
        <Nav>
          <NavLink href="#home">Home</NavLink>
          <NavLink href="#about">About</NavLink>
        </Nav>
      </Header>
      <Hero>
        <MapFrame>
          <CityMap />
          <ZoomControl>
            <ZoomButton type="button" aria-label="Zoom in">+</ZoomButton>
            <ZoomButton type="button" aria-label="Zoom out">−</ZoomButton>
          </ZoomControl>
          <Attribution>
            <AttributionLink href="#mapbox">© Mapbox</AttributionLink>{" "}
            <AttributionLink href="#osm">© OpenStreetMap</AttributionLink>{" "}
            <AttributionLink href="#improve">Improve this map</AttributionLink>
          </Attribution>
        </MapFrame>
        <Featured>
          <Eyebrow>Recently added group</Eyebrow>
          <GroupName>Cecil Sharp House</GroupName>
          <Copy><Mark $from="25%">Cecil Sharp House 2 Regent’s Park Road NW1 7AY</Mark></Copy>
          <Copy>
            The Cecil Sharp House garden is a low maintenance permaculture design inspired by the folk adage: one
            for the birds, one for the bugs and one for me which chimes very well with the<br />
            permaculture ethos of earth care, people care, fair shares. It is based on working with the
            soil-food-web, wildlife and plants as <Unbroken>co-gardeners</Unbroken> to maintain health and
            fertility.
          </Copy>
          <Copy><Mark $from="25%">Biodiversity</Mark> <Mark $from="25%">Green Spaces</Mark></Copy>
          <FeaturedLinks>
            <FeaturedLink href="#website" $gap="11px">Website</FeaturedLink>
            <FeaturedLink href="#facebook" $gap="18px">Facebook</FeaturedLink>
            <FeaturedLink href="#twitter" $gap="0">Twitter</FeaturedLink>
          </FeaturedLinks>
        </Featured>
      </Hero>
      <Groups>
        <Count><Mark $from="45%">14 Community Groups Strong!</Mark></Count>
        <SearchBox type="text" aria-label="Search groups" placeholder="Search.." value={query} onChange={(e) => setQuery(e.target.value)} />
        <Actions>
          <ActionButton type="button" onClick={() => setQuery("")}>Clear Search</ActionButton>
          <ActionButton type="button">Reset Map</ActionButton>
        </Actions>
        <Table>
          <colgroup>
            <Col $width="285px" />
            <Col />
            <Col $width="96px" />
            <Col $width="100px" />
            <Col $width="249px" />
          </colgroup>
          <thead>
            <tr>
              {["Name", "Address", "City", "Country", "On The Web"].map((h) => <HeadCell key={h} scope="col">{h}</HeadCell>)}
            </tr>
          </thead>
          <tbody>
            {shown.map(([name, address, ...seen]) => (
              <Row key={name}>
                <Cell>{name}</Cell>
                <Cell>{address}</Cell>
                <Cell>London</Cell>
                <Cell>UK</Cell>
                <Cell>
                  <WebLinks>
                    {sites.map((s, i) => <WebLink key={s} href={`#${s.toLowerCase()}`} $seen={seen[i] === 1}>{s}</WebLink>)}
                  </WebLinks>
                </Cell>
              </Row>
            ))}
          </tbody>
        </Table>
      </Groups>
      <Counter type="button" aria-label="Notifications">0</Counter>
    </>
  );
}
